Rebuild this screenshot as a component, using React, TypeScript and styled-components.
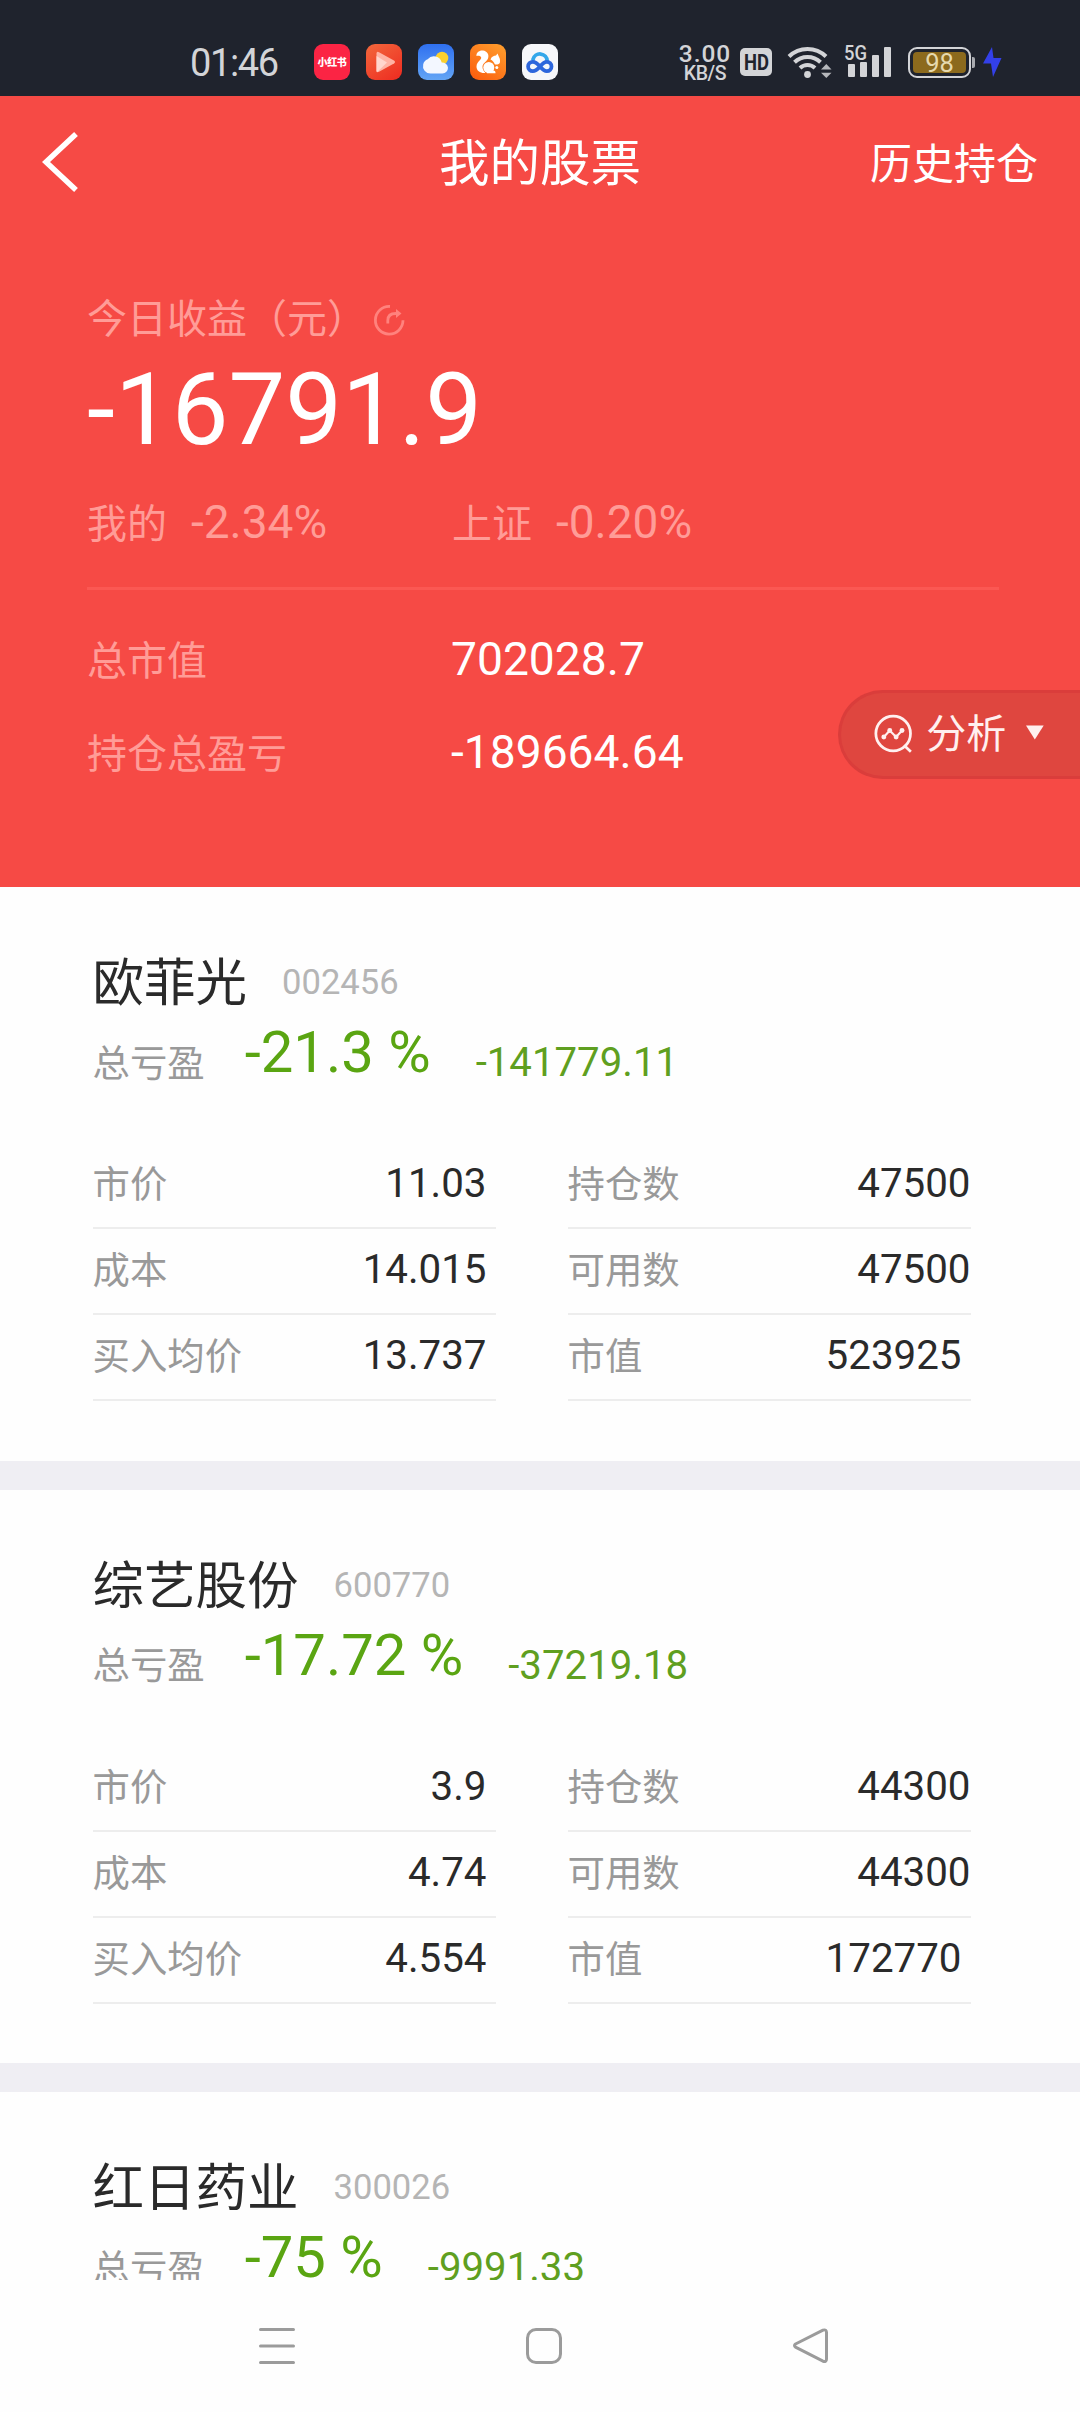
import React from 'react';
import styled, { createGlobalStyle } from 'styled-components';

const GlobalStyle = createGlobalStyle`
  html, body { margin: 0; padding: 0; background: #fefefe; }
  * { box-sizing: border-box; }
  body { font-family: Roboto, "Noto Sans CJK SC", sans-serif; font-weight: 400; }
`;

const Screen = styled.div`
  width: 1080px;
  height: 2412px;
  display: flex;
  flex-direction: column;
  overflow: hidden;
  background: #fefefe;
`;

/* ---------- status bar ---------- */
const StatusBar = styled.div`
  flex: none;
  height: 96px;
  padding: 28px 78px 0 190px;
  display: flex;
  justify-content: space-between;
  align-items: flex-start;
  background: #1f232d;
  color: #d3d4d7;
`;
const StatusGroup = styled.div`
  height: 68px;
  display: flex;
  align-items: center;
`;
const Clock = styled.span`
  width: 124px;
  font-size: 38px;
  line-height: 68px;
  padding-top: 2px;
  letter-spacing: -1.4px;
`;
const Apps = styled.span`
  display: flex;
  gap: 16px;
`;
const AppIcon = styled.span<{ $bg: string }>`
  width: 36px;
  height: 36px;
  border-radius: 9px;
  background: ${p => p.$bg};
  display: flex;
  align-items: center;
  justify-content: center;
`;
const TinyLabel = styled.span`
  color: #fff;
  font: 900 10px/16px "Noto Sans CJK SC", sans-serif;
  letter-spacing: -0.4px;
  white-space: nowrap;
`;
const Speed = styled.span`
  width: 54px;
  margin-top: 3px;
  display: flex;
  flex-direction: column;
  align-items: center;
  font-weight: 500;
`;
const SpeedValue = styled.span`
  font-size: 24.5px;
  line-height: 20px;
  letter-spacing: 1px;
`;
const SpeedUnit = styled.span`
  font-size: 19.5px;
  line-height: 19px;
  letter-spacing: -0.4px;
`;
const HdBadge = styled.span`
  width: 32px;
  height: 28px;
  margin-left: 8px;
  border-radius: 5px;
  background: #d3d4d7;
  display: flex;
`;
const WifiSlot = styled.span`
  width: 46px;
  height: 36px;
  margin-left: 15px;
`;
const SignalSlot = styled.span`
  width: 50px;
  height: 36px;
  margin-left: 11px;
`;
const Battery = styled.span`
  width: 63px;
  height: 31px;
  margin-left: 14px;
  border: 2px solid #d3d4d7;
  border-radius: 9px;
  padding: 3px;
  display: flex;
`;
const BatteryFill = styled.span`
  flex: 1;
  border-radius: 4px;
  background: #8c6a1d;
  color: #e6d9ae;
  text-align: center;
  font: 400 25.5px/22px Roboto, sans-serif;
`;
const BatteryNub = styled.span`
  width: 3px;
  height: 11px;
  margin-left: 1px;
  border-radius: 0 2px 2px 0;
  background: #a9abb0;
`;
const BoltSlot = styled.span`
  width: 20px;
  height: 32px;
  margin-left: 7px;
`;

/* ---------- red summary ---------- */
const Hero = styled.header`
  flex: none;
  position: relative;
  height: 791px;
  background: #f64a45;
  color: #fff;
`;
const TitleBar = styled.div`
  height: 135px;
  padding: 0 42px;
  display: grid;
  grid-template-columns: 1fr auto 1fr;
  align-items: center;
`;
const BackIcon = styled.svg`
  margin-bottom: 4px;
`;
const PageTitle = styled.h1`
  margin: 1px 0 0;
  font-size: 50.5px;
  font-weight: 400;
  line-height: 70px;
`;
const HistoryLink = styled.span`
  justify-self: end;
  margin-top: 2px;
  font-size: 42px;
  line-height: 60px;
`;
const HeroBody = styled.div`
  padding: 61px 81px 0 87px;
`;
const TodayLabel = styled.div`
  display: flex;
  align-items: center;
  gap: 6px;
  height: 56px;
  font-size: 40px;
  line-height: 56px;
  color: #ff9c97;
`;
const TodayValue = styled.div`
  height: 120px;
  margin-top: 2px;
  font-size: 101px;
  line-height: 120px;
`;
const RateRow = styled.div`
  display: grid;
  grid-template-columns: 365px auto;
  height: 56px;
  margin-top: 23.5px;
`;
const Rate = styled.div`
  display: flex;
  align-items: baseline;
  gap: 24px;
  line-height: 56px;
  color: #ff9c97;
`;
const RateName = styled.span`
  font-size: 40px;
`;
const RateValue = styled.span`
  font-size: 46px;
`;
const HeroRule = styled.div`
  height: 3px;
  margin: 37.5px 0 38px;
  background: #fb5853;
`;
const TotalRow = styled.div`
  display: grid;
  grid-template-columns: 364px auto;
  align-items: center;
  height: 56px;
  margin-bottom: 37px;
  line-height: 56px;
`;
const TotalName = styled.span`
  margin-top: 6px;
  font-size: 40px;
  color: #ff9c97;
`;
const TotalValue = styled.span`
  font-size: 46.2px;
`;
const AnalysisButton = styled.button`
  position: absolute;
  right: 0;
  top: 594px;
  width: 242px;
  height: 89px;
  border: 3px solid #da3d3b;
  border-right: 0;
  border-radius: 45px 0 0 45px;
  background: #df463f;
  color: #fff0ef;
  padding: 0 35px 0 32px;
  display: flex;
  align-items: center;
  font: 400 40px/56px Roboto, "Noto Sans CJK SC", sans-serif;
`;
const AnalysisText = styled.span`
  margin: 0 19px 0 12px;
  white-space: nowrap;
`;
const Caret = styled.svg`
  margin-bottom: 4px;
`;

/* ---------- holdings ---------- */
const Holdings = styled.main`
  flex: none;
  height: 1393px;
  overflow: hidden;
`;
const Card = styled.section`
  height: 602.5px;
  padding: 64px 110px 0 92.500px;
  border-bottom: 29px solid #efeef3;
`;
const CardTitle = styled.div`
  display: flex;
  align-items: center;
  gap: 35px;
  height: 66px;
  line-height: 66px;
`;
const StockName = styled.h2`
  margin: 0;
  font-size: 51.5px;
  font-weight: 400;
  color: #2a2a2a;
`;
const StockCode = styled.span`
  margin-top: -4px;
  font-size: 34.6px;
  color: #b5b5b5;
`;
const ProfitRow = styled.div`
  display: flex;
  align-items: center;
  height: 68px;
  margin-top: 1px;
  line-height: 46px;
`;
const ProfitLabel = styled.span`
  margin: 23px 40px 0 0;
  font-size: 37.4px;
  color: #999;
`;
const ProfitRate = styled.span`
  margin-right: 45px;
  font-size: 58px;
  color: #5aa512;
  white-space: pre;
`;
const ProfitAmount = styled.span`
  margin-top: 22px;
  font-size: 40.2px;
  color: #5f9f20;
`;
const Figures = styled.div`
  display: grid;
  grid-template-columns: 403px 403px;
  column-gap: 72px;
  margin-top: 57px;
`;
const Figure = styled.div<{ $inset: number }>`
  display: flex;
  justify-content: space-between;
  align-items: center;
  height: 86px;
  padding-right: ${p => p.$inset}px;
  border-bottom: 2px solid #ededed;
`;
const FigureName = styled.span`
  font-size: 37.4px;
  line-height: 50px;
  color: #999;
`;
const FigureValue = styled.span`
  font-size: 40.3px;
  line-height: 50px;
  margin-top: -2px;
  color: #2a2a2a;
`;

/* ---------- system navigation ---------- */
const NavBar = styled.nav`
  flex: 1;
  padding: 47px 250px 0 258px;
  display: flex;
  justify-content: space-between;
  align-items: flex-start;
  background: #fefefe;
`;

const stocks = [
  {
    name: '欧菲光', code: '002456', rate: '-21.3 %', amount: '-141779.11',
    figures: [['市价', '11.03'], ['持仓数', '47500'], ['成本', '14.015'], ['可用数', '47500'], ['买入均价', '13.737'], ['市值', '523925']],
  },
  {
    name: '综艺股份', code: '600770', rate: '-17.72 %', amount: '-37219.18',
    figures: [['市价', '3.9'], ['持仓数', '44300'], ['成本', '4.74'], ['可用数', '44300'], ['买入均价', '4.554'], ['市值', '172770']],
  },
  { name: '红日药业', code: '300026', rate: '-75 %', amount: '-9991.33', figures: [] },
];

// Left-column values and the market value keep a small gap to the rule's end.
const insetFor = (i: number) => (i % 2 === 0 || i === 5 ? 9 : 0);

const PlayIcon = () => (
  <svg width="36" height="36" viewBox="0 0 36 36">
    <path d="M10.500 9.500Q10.500 7 13 8.200L28 16.400Q30 18 28 19.500L13 27.800Q10.500 29 10.500 26.500Z" fill="#ffb3a4" />
    <path d="M10.500 12 21 18.500 11 28.300Q10.500 28 10.500 26.500Z" fill="#ffd6cd" />
  </svg>
);
const WeatherIcon = () => (
  <svg width="36" height="36" viewBox="0 0 36 36">
    <circle cx="24" cy="14" r="6.300" fill="#fbd02f" />
    <path d="M12.500 29.500a7.500 7.500 0 0 1-7.300-9.300 7 7 0 0 1 4.500-5 8 8 0 0 1 14 3.200 6 6 0 0 1 6.300 5.300 5.800 5.800 0 0 1-5.500 5.800z" fill="#f3f7ff" />
  </svg>
);
const SquirrelIcon = () => (
  <svg width="36" height="36" viewBox="0 0 36 36" fill="#fff">
    <path d="M6.500 12C6 8.500 9.500 6 13 6.500c4 .6 6.500 4 5 8C17 17.500 12.500 19 12.500 23c0 2 1 4 3 6C10.500 29.500 6.500 27 6.500 22.500c0-3 1.500-4.500 3.500-6.500 1-1.200 1.500-2 1-3C10 11.500 8 11.500 6.500 12Z" />
    <path d="M20.500 15.500C21.500 12.500 24 11.500 26 11.500l1.500-2 1.500 3.500c1 1.500 1.300 3.800.8 6-1.500 1.600-3.500 1.800-5 1.200C24 18 22.500 16.500 20.500 15.500Z" />
    <circle cx="18.800" cy="23.500" r="5.500" />
    <path d="M17 26.500h6.500q2 0 2 2v.7H17Z" />
    <circle cx="26.800" cy="23.500" r="1.500" />
  </svg>
);
const CloudIcon = () => (
  <svg width="36" height="36" viewBox="0 0 36 36" fill="none" strokeLinecap="round" strokeWidth="3.800">
    <path d="M11 15.500a7.200 7.200 0 0 1 14.200 1.500" stroke="#33a7ea" />
    <path d="M18 22.500C15 19 13 17.800 10.800 17.800a4.700 4.700 0 0 0 0 9.400C13.500 27.200 15.500 25.500 18 22.500S22.500 17.800 24.800 17.800a4.700 4.700 0 0 1 0 9.400C22.500 27.200 20.500 25.500 18 22.500Z" stroke="#2d66dc" />
  </svg>
);
const WifiIcon = () => (
  <svg width="46" height="36" viewBox="0 0 46 36">
    <g fill="none" stroke="#d3d4d7" strokeWidth="4">
      <path d="M2 12.500a26.500 26.500 0 0 1 37 0" />
      <path d="M7.500 18.300a18.700 18.700 0 0 1 26 0" />
      <path d="M13 24a10.800 10.800 0 0 1 15 0" />
    </g>
    <circle cx="20.500" cy="30.500" r="3.400" fill="#d3d4d7" />
    <path d="M34 25.500 39.300 20l5.200 5.500ZM34 28.700h10.500L39.300 34Z" fill="#b5b7bb" />
  </svg>
);
const SignalBars = styled.svg`
  overflow: visible;
`;
const SignalIcon = () => (
  <SignalBars width="50" height="36" viewBox="0 0 50 36" fill="#d3d4d7">
    <text x="0" y="16" fontFamily="Roboto, sans-serif" fontWeight="500" fontSize="21" textLength="23" lengthAdjust="spacingAndGlyphs">5G</text>
    <rect x="4" y="20" width="7" height="13" rx="1" />
    <rect x="16" y="18" width="7" height="15" rx="1" />
    <rect x="28" y="11" width="7" height="22" rx="1" />
    <rect x="40" y="3" width="7" height="30" rx="1" />
  </SignalBars>
);

const StatusArea = () => (
  <StatusBar>
    <StatusGroup>
      <Clock>01:46</Clock>
      <Apps>
        <AppIcon $bg="#fb2444"><TinyLabel>小红书</TinyLabel></AppIcon>
        <AppIcon $bg="linear-gradient(145deg, #f2683c, #ee2a20)"><PlayIcon /></AppIcon>
        <AppIcon $bg="linear-gradient(#2f70f0, #63a5f5)"><WeatherIcon /></AppIcon>
        <AppIcon $bg="linear-gradient(215deg, #ffa02e, #fb5a0c)"><SquirrelIcon /></AppIcon>
        <AppIcon $bg="#f6f7fa"><CloudIcon /></AppIcon>
      </Apps>
    </StatusGroup>
    <StatusGroup>
      <Speed>
        <SpeedValue>3.00</SpeedValue>
        <SpeedUnit>KB/S</SpeedUnit>
      </Speed>
      <HdBadge>
        <svg width="32" height="28" viewBox="0 0 32 28">
          <text x="4" y="22" fill="#1f232d" fontFamily="Roboto, sans-serif" fontWeight="700" fontSize="22.500" textLength="25" lengthAdjust="spacingAndGlyphs">HD</text>
        </svg>
      </HdBadge>
      <WifiSlot><WifiIcon /></WifiSlot>
      <SignalSlot><SignalIcon /></SignalSlot>
      <Battery><BatteryFill>98</BatteryFill></Battery>
      <BatteryNub />
      <BoltSlot>
        <svg width="20" height="32" viewBox="0 0 20 32"><path d="M10 1 1 17.500h8L11 31 19.500 12H11.500Z" fill="#3340e8" /></svg>
      </BoltSlot>
    </StatusGroup>
  </StatusBar>
);

export default function App() {
  return (
    <Screen>
      <GlobalStyle />
      <StatusArea />
      <Hero>
        <TitleBar>
          <BackIcon width="38" height="62" viewBox="0 0 38 62">
            <path d="M34 3 4 31l30 28" fill="none" stroke="#fff" strokeWidth="5.500" />
          </BackIcon>
          <PageTitle>我的股票</PageTitle>
          <HistoryLink>历史持仓</HistoryLink>
        </TitleBar>
        <HeroBody>
          <TodayLabel>
            今日收益（元）
            <svg width="32" height="32" viewBox="0 0 32 32" fill="none" stroke="#ff827d" strokeWidth="2.800">
              <path d="M17 2.500A13.800 13.800 0 1 0 30 16.300" />
              <path d="M14.800 19.500v-3q0-7 8-7h2" />
              <path d="M23 5 28.500 9.500 23 14Z" fill="#ff827d" stroke="none" />
            </svg>
          </TodayLabel>
          <TodayValue>-16791.9</TodayValue>
          <RateRow>
            <Rate><RateName>我的</RateName><RateValue>-2.34%</RateValue></Rate>
            <Rate><RateName>上证</RateName><RateValue>-0.20%</RateValue></Rate>
          </RateRow>
          <HeroRule />
          <TotalRow><TotalName>总市值</TotalName><TotalValue>702028.7</TotalValue></TotalRow>
          <TotalRow><TotalName>持仓总盈亏</TotalName><TotalValue>-189664.64</TotalValue></TotalRow>
        </HeroBody>
        <AnalysisButton>
          <svg width="42" height="42" viewBox="0 0 42 42" fill="none" stroke="#fff0ef" strokeWidth="2.800">
            <circle cx="20.500" cy="19.500" r="17.600" />
            <path d="M31.500 31.500 38.500 38" />
            <path d="M11 23 17 16.500 23.500 23 29.500 16.500" strokeWidth="2.200" />
            <g fill="#fff0ef" stroke="none">
              <circle cx="11" cy="23" r="2.500" /><circle cx="17" cy="16.500" r="2.500" />
              <circle cx="23.500" cy="23" r="2.500" /><circle cx="29.500" cy="16.500" r="2.500" />
            </g>
          </svg>
          <AnalysisText>分析</AnalysisText>
          <Caret width="20" height="15" viewBox="0 0 20 15"><path d="M1 .5h18L10 14.500Z" fill="#fff0ef" /></Caret>
        </AnalysisButton>
      </Hero>
      <Holdings>
        {stocks.map(s => (
          <Card key={s.code}>
            <CardTitle><StockName>{s.name}</StockName><StockCode>{s.code}</StockCode></CardTitle>
            <ProfitRow>
              <ProfitLabel>总亏盈</ProfitLabel>
              <ProfitRate>{s.rate}</ProfitRate>
              <ProfitAmount>{s.amount}</ProfitAmount>
            </ProfitRow>
            <Figures>
              {s.figures.map(([name, value], i) => (
                <Figure key={name} $inset={insetFor(i)}>
                  <FigureName>{name}</FigureName>
                  <FigureValue>{value}</FigureValue>
                </Figure>
              ))}
            </Figures>
          </Card>
        ))}
      </Holdings>
      <NavBar>
        <svg width="38" height="38" viewBox="0 0 38 38" stroke="#9b9b9b" strokeWidth="3" strokeLinecap="round"><path d="M2.500 2.500h33M2.500 19h33M2.500 35.500h33" /></svg>
        <svg width="38" height="38" viewBox="0 0 38 38" fill="none" stroke="#9b9b9b" strokeWidth="3"><rect x="2.500" y="2.500" width="33" height="33" rx="8.500" /></svg>
        <svg width="38" height="38" viewBox="0 0 38 38" fill="none" stroke="#9b9b9b" strokeWidth="3" strokeLinejoin="round"><path d="M31 3.200 3.500 17Q1.500 18.500 3.500 20.200L31 34.200Q34.500 35.200 34.500 32V5.500Q34.500 2 31 3.200Z" /></svg>
      </NavBar>
    </Screen>
  );
}
